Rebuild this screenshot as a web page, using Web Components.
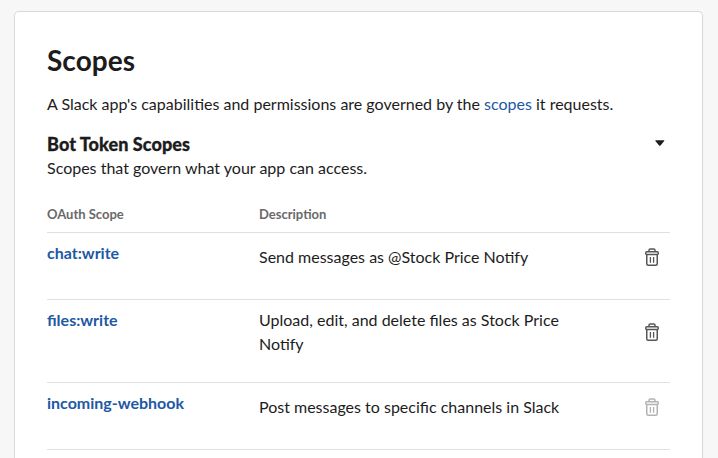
<!DOCTYPE html>
<html lang="en">
<head>
<meta charset="utf-8">
<title>Scopes</title>
<style>
html, body { margin: 0; height: 458px; overflow: hidden; background: #f7f7f7; }
body { display: flow-root; font: 16px/24px Lato, "Liberation Sans", sans-serif; color: #1d1c1d; }
a { color: #2158a4; text-decoration: none; }
</style>
</head>
<body>
<settings-card>
  <span slot="title">Scopes</span>
  <span slot="intro">A Slack app's capabilities and permissions are governed by the <a href="#">scopes</a> it requests.</span>
  <scope-section>
    <span slot="heading">Bot Token Scopes</span>
    <span slot="note">Scopes that govern what your app can access.</span>
    <scope-row name="chat:write">Send messages as @Stock Price Notify</scope-row>
    <scope-row name="files:write" tall>Upload, edit, and delete files as Stock Price Notify</scope-row>
    <scope-row name="incoming-webhook" locked>Post messages to specific channels in Slack</scope-row>
  </scope-section>
</settings-card>
<script>
const define = (tag, html, setup) => customElements.define(tag, class extends HTMLElement {
  constructor() {
    super();
    this.attachShadow({ mode: 'open' }).innerHTML = html;
  }
  connectedCallback() { if (setup) setup(this); }
});

define('settings-card', `
<style>
:host { display: block; box-sizing: border-box; margin: 11px 15px 0 14px; height: 447px; padding: 30px 32px 0;
  background: #fff; border: 1px solid #d9d9d9; border-bottom: 0; border-radius: 5px 5px 0 0; box-shadow: 0 1px 2px rgba(0,0,0,.04); }
h1 { margin: 0; font-size: 28px; line-height: 36px; font-weight: 700; letter-spacing: .05px; }
p { margin: 14px 0 16px; }
</style>
<h1><slot name="title"></slot></h1>
<p><slot name="intro"></slot></p>
<slot></slot>`);

define('trash-icon', `
<style>:host { display: block; width: 14px; height: 18px; color: #565656; } svg { display: block; }</style>
<svg width="14" height="18" viewBox="0 0 14 18" fill="none" stroke="currentColor" stroke-width="1.5" stroke-linejoin="round">
  <path d="M4 3.5V2.2Q4 .9 5.3.9H8.7Q10 .9 10 2.2V3.5"/>
  <rect x=".75" y="3.75" width="12.5" height="2.7" rx="1"/>
  <path d="M1.75 6.5V15.7Q1.75 17.2 3.25 17.2H10.75Q12.25 17.2 12.25 15.7V6.5"/>
  <path d="M5.4 9V14.8M8.6 9V14.8" stroke-width="1.3"/>
</svg>`);

define('caret-icon', `
<style>:host { display: block; width: 10px; height: 6px; } svg { display: block; }</style>
<svg width="10" height="6" viewBox="0 0 10 6"><path d="M.8.2H8.9Q9.7.3 9.2 1L5.5 5.4Q4.8 6 4.1 5.4L.4 1Q0 .3.8.2Z" fill="#1d1c1d"/></svg>`);

define('scope-section', `
<style>
:host { display: block; }
.top { display: flex; justify-content: space-between; }
h2 { margin: 0; font-size: 18px; line-height: 24px; font-weight: 900; letter-spacing: .07px; -webkit-text-stroke: .3px #1d1c1d; }
caret-icon { margin: 8px 5px 0 0; }
.head { display: grid; grid-template-columns: 212px 1fr; box-sizing: border-box; height: 53px; padding-top: 25px;
  font-size: 13px; line-height: 18px; font-weight: 700; color: #696969; border-bottom: 1px solid #e0e0e0; }
</style>
<div class="top"><div><h2><slot name="heading"></slot></h2><slot name="note"></slot></div><caret-icon></caret-icon></div>
<div class="head"><span>OAuth Scope</span><span>Description</span></div>
<slot></slot>`);

define('scope-row', `
<style>
:host { display: grid; grid-template-columns: 212px 326px 1fr; box-sizing: border-box; height: 67px;
  border-bottom: 1px solid #e0e0e0; padding-top: 8px; }
:host([tall]) { height: 83px; }
a { color: #2158a4; font-weight: 700; text-decoration: none; }
.desc { padding-top: 4px; }
:host([tall]) .desc { padding-top: 0; }
trash-icon { margin: 7px 0 0 60px; }
:host([tall]) trash-icon { margin-top: 15px; }
:host([locked]) trash-icon { color: #b3b3b3; }
</style>
<a href="#"></a><div class="desc"><slot></slot></div><trash-icon></trash-icon>`,
el => { el.shadowRoot.querySelector('a').textContent = el.getAttribute('name'); });
</script>
</body>
</html>
